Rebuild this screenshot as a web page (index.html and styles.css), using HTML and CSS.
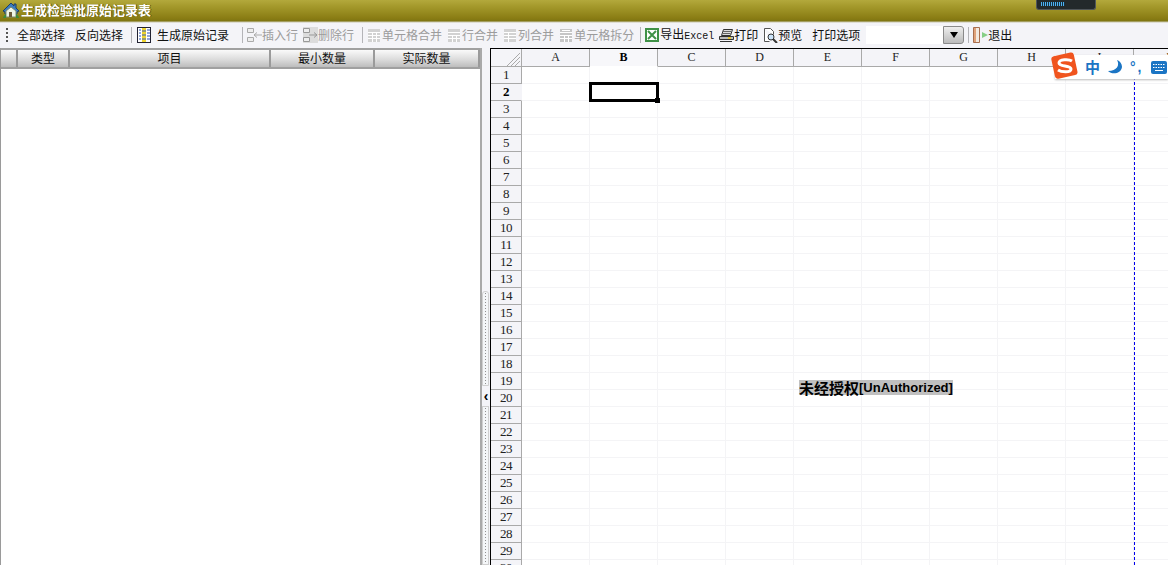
FILE: index.html
```html
<!DOCTYPE html>
<html lang="zh">
<head>
<meta charset="utf-8">
<title>生成检验批原始记录表</title>
<link rel="stylesheet" href="styles.css">
</head>
<body>
<header class="titlebar">
  <svg class="home" width="18" height="18" viewBox="0 0 18 18"><path d="M1 10 9 2l3 3V3h2v4l3 3-2 1v2H3v-2z" fill="#3b7cc0" stroke="#1f3f66"/><path d="M4 10l5-4 5 4v6H4z" fill="#eef5e6" stroke="#7a8a70"/><rect x="7" y="11" width="3" height="5" fill="#6b5a3a"/><path d="M1 17c1-3 3-4 3-4v4zM14 13c2 1 3 3 3 4h-3z" fill="#3c8c3c"/></svg>
  <span class="title">生成检验批原始记录表</span>
  <div class="meter"><div class="meter-fill"></div></div>
</header>
<nav class="toolbar">
  <span class="grip"></span>
  <span class="tool">全部选择</span>
  <span class="tool m10">反向选择</span>
  <span class="sep"></span>
  <span class="tool gap6">
    <svg width="14" height="16" viewBox="0 0 14 16"><rect x=".5" y=".5" width="13" height="15" fill="#fff" stroke="#223"/><rect x="5" y="1" width="4" height="14" fill="#efd52f"/><path d="M2 3h2M2 6h2M2 9h2M2 12h2M10 3h3M10 6h3M10 9h3M10 12h3" stroke="#2a50b0"/><path d="M5 4h4M5 8h4M5 12h4" stroke="#3a60c0"/></svg>
    生成原始记录
  </span>
  <span class="sep far"></span>
  <span class="tool dim">
    <svg width="15" height="16" viewBox="0 0 15 16"><path d="M.5 1.500h6v4h-6zM.5 10.500h6v4h-6z" fill="#eee" stroke="#aaa"/><path d="M7 8h8M7 8l3-2.500M7 8l3 2.500" fill="none" stroke="#aaa"/></svg>
    插入行
  </span>
  <span class="tool dim m5">
    <svg width="15" height="16" viewBox="0 0 15 16"><rect width="15" height="16" fill="#dcdcdc"/><path d="M.5 1.500h6v4h-6zM.5 10.500h6v4h-6z" fill="#eee" stroke="#999"/><path d="M6 8h8M14 8l-3-2.500M14 8l-3 2.500" fill="none" stroke="#999"/></svg>
    删除行
  </span>
  <span class="sep"></span>
  <span class="tool dim gap2">
    <svg width="12" height="14" viewBox="0 0 12 14"><rect y="1" width="12" height="13" fill="#d2d2d2"/><path d="M0 4.500h12M0 7.500h12M0 10.500h12M4.500 4v10M8.500 4v10" stroke="#fff"/></svg>
    单元格合并
  </span>
  <span class="tool dim gap2 m6">
    <svg width="12" height="14" viewBox="0 0 12 14"><rect y="1" width="12" height="13" fill="#d2d2d2"/><path d="M0 4.500h12M0 7.500h12M0 10.500h12M4.500 8v6M8.500 8v6" stroke="#fff"/></svg>
    行合并
  </span>
  <span class="tool dim gap2 m6">
    <svg width="12" height="14" viewBox="0 0 12 14"><rect y="1" width="12" height="13" fill="#d2d2d2"/><path d="M0 4.500h12M0 7.500h12M0 10.500h12M4.500 4v10" stroke="#fff"/></svg>
    列合并
  </span>
  <span class="tool dim gap2 m6">
    <svg width="12" height="14" viewBox="0 0 12 14"><rect y="1" width="12" height="13" fill="#c6c6c6"/><path d="M0 4.500h12M0 7.500h12M0 10.500h12M4.500 8v6M8.500 8v6M2 2.500h8" stroke="#fff"/></svg>
    单元格拆分
  </span>
  <span class="sep narrow"></span>
  <span class="tool gap1">
    <svg width="14" height="14" viewBox="0 0 14 14"><rect width="14" height="14" fill="#3f9147"/><rect x="2" y="2" width="10" height="10" fill="#fff"/><path d="M3 3l8 8M11 3l-8 8" stroke="#3f9147" stroke-width="2"/></svg>
    <span>导出<span class="latin">Excel</span></span>
  </span>
  <span class="tool gap0 m5">
    <svg width="15" height="15" viewBox="0 0 15 15"><path d="M4.500 1.500h9l-2 6h-9z" fill="#ddd" stroke="#333"/><path d="M4 3.500h8M3.500 5.500h8" stroke="#666"/><path d="M.5 8.500h14v3H.5z" fill="#bbb" stroke="#333"/><path d="M1 13.500h12" stroke="#333"/><rect x="9" y="9" width="3" height="2" fill="#e8c832"/></svg>
    打印
  </span>
  <span class="tool gap0 m5">
    <svg width="15" height="16" viewBox="0 0 15 16"><path d="M1.500 1.500h6l3 3v3M1.500 1.500v13h5" fill="#fff" stroke="#555"/><circle cx="8" cy="10" r="3" fill="#cde4fa" stroke="#333"/><path d="m10 12 4 4" stroke="#333" stroke-width="2"/></svg>
    预览
  </span>
  <span class="tool m10">打印选项</span>
  <div class="combo"><span class="combo-btn"><span class="tri"></span></span></div>
  <span class="sep tight"></span>
  <span class="tool gap0">
    <svg width="15" height="16" viewBox="0 0 15 16"><path d="M.5.500h6v15h-6z" fill="#e0a27a" stroke="#a86f4f"/><path d="M3 1h3v14H3z" fill="#f3e9df"/><path d="M5 8h4V5l6 3-6 3V8z" fill="#86cf86"/></svg>
    退出
  </span>
</nav>
<main class="content">
  <section class="left">
    <div class="lhead">
      <div class="lh c0"></div>
      <div class="lh c1">类型</div>
      <div class="lh c2">项目</div>
      <div class="lh c3">最小数量</div>
      <div class="lh c4">实际数量</div>
    </div>
  </section>
  <div class="splitter">
    <div class="grip-v top"></div>
    <div class="arrow">‹</div>
    <div class="grip-v bottom"></div>
  </div>
  <section class="sheet" id="sheet">
    <div class="corner"><svg width="30" height="17" viewBox="0 0 30 17"><path d="M29 4 16 17M29 8 20 17M29 12l-5 5" stroke="#a9a9a9" fill="none"/></svg></div>
    <div class="colhead">A</div><div class="colhead active">B</div><div class="colhead">C</div><div class="colhead">D</div><div class="colhead">E</div><div class="colhead">F</div><div class="colhead">G</div><div class="colhead">H</div><div class="colhead">I</div><div class="colhead">J</div>
    <div class="selection"></div>
    <div class="pagebreak"></div>
    <div class="watermark"><span class="wm-zh">未经授权</span><span>[UnAuthorized]</span></div>
  </section>
</main>
<div class="ime">
  <svg class="ime-logo" width="28" height="28" viewBox="0 0 28 28"><rect x="2" y="2" width="23" height="23" rx="3" fill="#f0541e" transform="rotate(-12 14 14)"/><path d="M21 9c-3-2-13-2-13 2 0 4 12 2 12 6 0 4-10 3-13 1" fill="none" stroke="#fff" stroke-width="3"/></svg>
  <span class="ime-zh">中</span>
  <svg width="16" height="16" viewBox="0 0 16 16"><path d="M10 1c3 5 0 11-9 11 4 4 13 3 14-4 0-3-2-6-5-7z" fill="#1b75c4"/></svg>
  <span class="ime-punc">°,</span>
  <svg width="16" height="13" viewBox="0 0 16 13"><rect width="16" height="13" rx="2" fill="#1b75c4"/><path d="M2 3.500h12M2 6.500h12" stroke="#fff" stroke-dasharray="1.500 1"/><path d="M4 9.500h8" stroke="#fff"/></svg>
</div>
<script src="sheet.js"></script>
</body>
</html>
```
FILE: styles.css
```css
* { box-sizing: border-box; }
html, body { margin: 0; padding: 0; height: 565px; overflow: hidden; background: #fff; }
body { font: 12px/16px "Noto Sans CJK SC", "Liberation Sans", sans-serif; color: #111; position: relative; }

.titlebar { height: 24px; display: flex; align-items: flex-start; padding: 1px 0 0 2px; gap: 1px;
  background: linear-gradient(#b3a93c 0, #a59a2c 6px, #8a7d14 18px, #7f7512 21px, #c9c7ae 22px, #f4f4f8 23px); }
.title { color: #fff; font-weight: 700; font-size: 13px; line-height: 18px; text-shadow: 1px 0 0 #5a5208; }
.meter { margin-left: auto; margin-right: 72px; margin-top: -1px; width: 60px; height: 10px; background: #23292b; border: 1px solid #50565a; border-top: 0; border-radius: 0 0 3px 3px; padding: 2px 4px; }
.meter-fill { width: 24px; height: 4px; background: repeating-linear-gradient(90deg, #4fb0f0 0 1px, #16303f 1px 2px); }

.toolbar { height: 24px; background: #f4f4f8; display: flex; align-items: center; padding: 0 0 2px 6px; white-space: nowrap; }
.grip { width: 2px; height: 14px; margin-right: 9px; background: repeating-linear-gradient(#555 0 2px, transparent 2px 4px); flex: none; }
.tool { display: flex; align-items: center; flex: none; gap: 0; }
.tool svg { flex: none; }
.dim { color: #9c9c9c; }
.gap0 { gap: 0; }
.gap1 { gap: 1px; }
.gap2 { gap: 2px; }
.gap6 { gap: 6px; }
.m5 { margin-left: 5px; }
.m6 { margin-left: 6px; }
.m10 { margin-left: 10px; }
.sep { width: 1px; height: 16px; background: #b4b4b8; margin: 0 5px 0 8px; flex: none; }
.sep.far { margin-left: 13px; margin-right: 4px; }
.sep.narrow { margin-left: 6px; margin-right: 4px; }
.sep.tight { margin-left: 4px; margin-right: 4px; }
.latin { font: 10px/16px "Liberation Mono", monospace; }
.combo { width: 98px; height: 18px; background: #fff; display: flex; justify-content: flex-end; margin-left: 6px; flex: none; }
.combo-btn { width: 21px; height: 18px; border: 1px solid #8a8a8a; border-radius: 0 3px 3px 0; background: linear-gradient(#eee, #bbb); display: flex; align-items: center; justify-content: center; }
.tri { width: 0; height: 0; border: 4px solid transparent; border-top: 6px solid #000; border-bottom: 0; }

.content { height: 517px; display: flex; }
.left { width: 480px; flex: none; border-left: 1px solid #9a9a9a; background: #fff; }
.lhead { height: 21px; display: flex; border-top: 2px solid #a0a0a0; border-bottom: 2px solid #a0a0a0; }
.lh { background: linear-gradient(#fafafa, #dcdcdc 55%, #bdbdbd); border-right: 2px solid #9a9a9a; text-align: center; line-height: 16px; font-size: 12px; }
.c0 { width: 17px; }
.c1 { width: 52px; }
.c2 { width: 201px; }
.c3 { width: 104px; }
.c4 { width: 105px; }

.splitter { width: 10px; flex: none; background: #f4f4f8; border-left: 2px solid #a9a9a9; position: relative; }
.grip-v { position: absolute; left: 0; width: 7px; background: #f4f6f8 radial-gradient(#8f8f8f 0.8px, transparent 1px) 0 0 / 5px 3px; border: 1px solid #d0d0d0; }
.grip-v.top { top: 243px; height: 95px; border-radius: 3px 3px 0 0; }
.grip-v.bottom { top: 358px; height: 159px; }
.arrow { position: absolute; top: 341px; left: 0; width: 8px; text-align: center; font: 700 14px/14px "Liberation Sans", sans-serif; color: #000; }

.sheet { flex: 1; position: relative; overflow: hidden; display: grid; border-left: 1px solid #000; border-top: 1px solid #000;
  grid-template-columns: 31px repeat(10, 68px); grid-template-rows: 18px; grid-auto-rows: 17px; align-content: start; }
.corner { background: #f4f4f8; border-right: 1px solid #a9a9a9; border-bottom: 1px solid #a9a9a9; }
.corner svg { display: block; }
.colhead { background: #f4f4f8; border-right: 1px solid #a9a9a9; border-bottom: 1px solid #a9a9a9; text-align: center; font: 12px/17px "Liberation Serif", serif; color: #222; }
.colhead.active { font-weight: 700; background: #f7f7fa; border-bottom-color: #fff; color: #000; }
.rowhead { background: #f4f4f8; border-right: 1px solid #a9a9a9; border-bottom: 1px solid #a9a9a9; text-align: center; font: 13px/16px "Liberation Serif", serif; letter-spacing: -.4px; color: #222; }
.rowhead.active { font-weight: 700; border-right-color: #f4f4f8; color: #000; }
.cell { background: #fff; border-right: 1px solid #f4f4f6; border-bottom: 1px solid #f4f4f6; }
.selection { position: absolute; left: 98px; top: 33px; width: 70px; height: 20px; border: 3px solid #000; }
.selection::after { content: ""; position: absolute; right: -4px; bottom: -4px; width: 5px; height: 5px; background: #000; }
.pagebreak { position: absolute; left: 643px; top: 18px; bottom: 0; border-left: 1px dashed #0000ee; }
.watermark { position: absolute; left: 308px; top: 331px; display: flex; height: 15px; background: #c0c0c0; font: 700 13px/15px "Liberation Sans", sans-serif; color: #000; white-space: nowrap; }
.wm-zh { font: 700 15px/15px "Noto Sans CJK SC", sans-serif; }

.ime { position: absolute; left: 1055px; top: 55px; width: 113px; height: 24px; background: #fff; display: flex; align-items: center; gap: 7px; box-shadow: 0 1px 2px #bbb; }
.ime-logo { position: absolute; left: -4px; top: -3px; }
.ime-zh { margin-left: 30px; width: 15px; color: #1b75c4; font-weight: 700; font-size: 15px; }
.ime-punc { color: #1b75c4; font: 700 14px/14px "Liberation Sans", sans-serif; width: 14px; letter-spacing: 2px; }
```
FILE: sheet.js
```js
var sheet = document.getElementById('sheet');
var anchor = sheet.querySelector('.selection');
for (var r = 1; r <= 30; r++) {
  var h = document.createElement('div');
  h.className = 'rowhead' + (r === 2 ? ' active' : '');
  h.textContent = r;
  sheet.insertBefore(h, anchor);
  for (var c = 0; c < 10; c++) {
    var d = document.createElement('div');
    d.className = 'cell';
    sheet.insertBefore(d, anchor);
  }
}
```
